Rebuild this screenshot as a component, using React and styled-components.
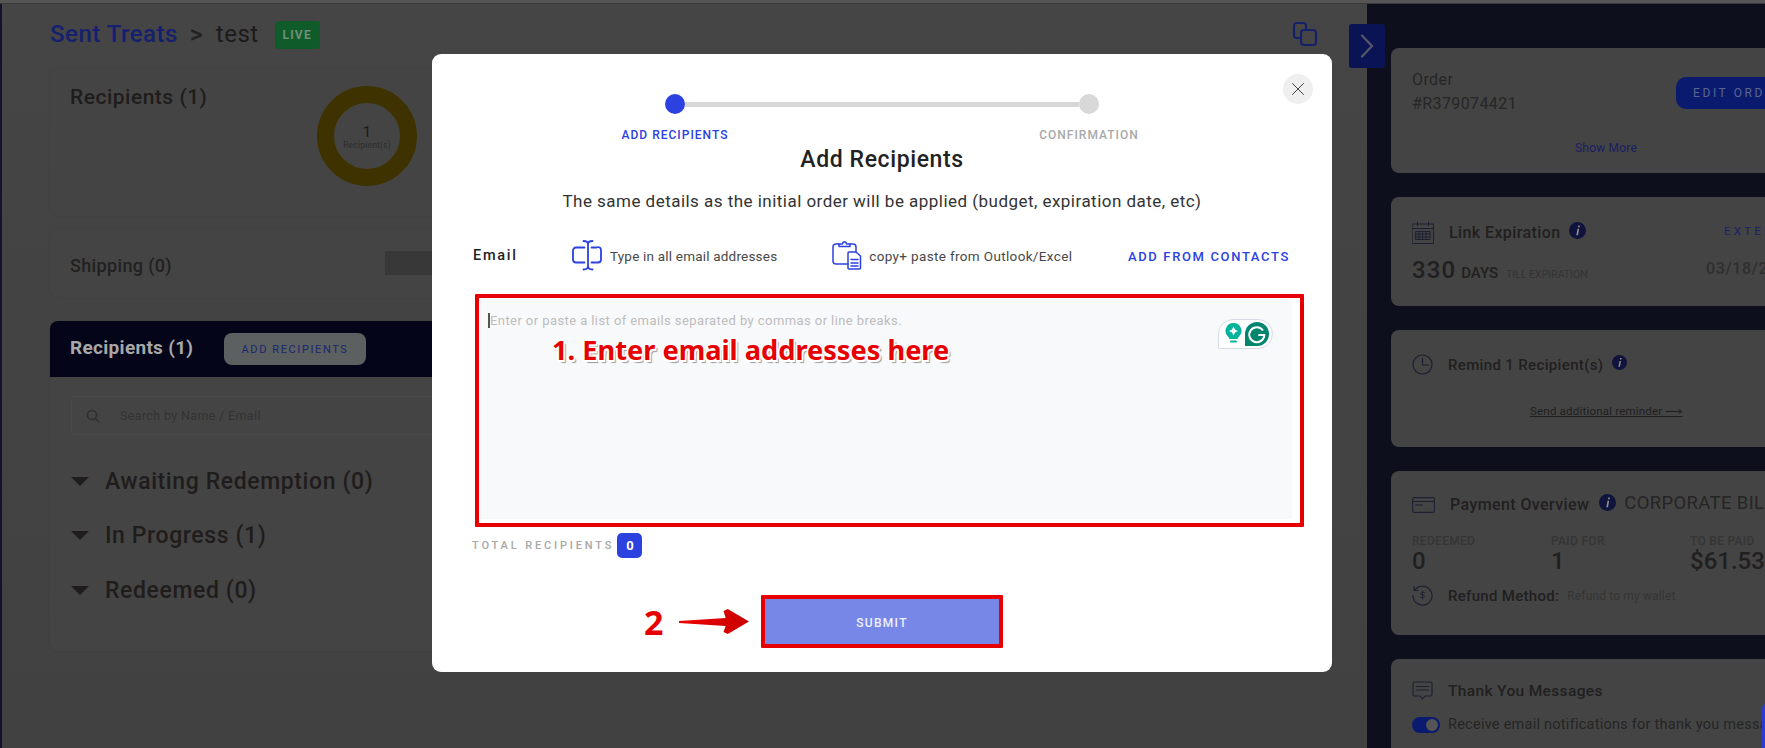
import React from "react";
import styled, { createGlobalStyle } from "styled-components";

const FONT = `"Roboto", "Noto Sans", "Liberation Sans", sans-serif`;
const BLUE = "#2b41e0";
const RED = "#e60000";

const Global = createGlobalStyle`
  html, body { margin: 0; padding: 0; height: 748px; overflow: hidden; background: #434343; }
  body { font-family: ${FONT}; }
  * { box-sizing: border-box; }
`;

const Page = styled.div`display:flex;flex-direction:column;width:1765px;height:748px;overflow:hidden;`;
const TopLine = styled.div`height:4px;background:#555;border-bottom:1px solid #3c3c3c;flex:none;`;
const Stage = styled.div`position:relative;flex:1;display:flex;min-height:0;background:linear-gradient(#454545,#414141);`;
const Rail = styled.div`width:2px;background:#14122e;flex:none;`;
const Main = styled.main`width:1365px;flex:none;padding:16px 0 0 48px;`;

const Crumbs = styled.div`display:flex;align-items:center;height:28px;width:1268px;position:relative;`;
const CrumbLink = styled.span`font-size:24px;font-weight:500;color:#15206e;letter-spacing:.5px;`;
const CrumbSep = styled.span`font-size:25px;font-weight:500;color:#222;margin:0 13px 0 12px;`;
const CrumbName = styled.span`font-size:24px;color:#1c1a1a;letter-spacing:.5px;`;
const LiveBadge = styled.span`margin:2px 0 0 16px;width:45px;height:28px;border-radius:4px;background:#0f5c2a;color:#6f9078;font-size:12px;font-weight:700;letter-spacing:1.2px;display:flex;align-items:center;justify-content:center;`;
const CopyBtn = styled.span`margin-left:auto;display:flex;color:#14206a;`;

const Card = styled.section`width:1240px;background:#444;border-radius:8px;box-shadow:0 0 3px rgba(0,0,0,.05);`;
const SummaryCard = styled(Card)`margin-top:20px;height:148px;padding:18px 20px;display:flex;`;
const SummaryTitle = styled.h2`margin:0;width:247px;font-size:21px;line-height:22px;font-weight:500;color:#1f1c1c;letter-spacing:.5px;`;
const Donut = styled.div`width:100px;height:100px;border-radius:50%;border:17px solid #3e3300;display:flex;flex-direction:column;align-items:center;justify-content:center;color:#1f1c1c;`;
const DonutNum = styled.span`font-size:15px;line-height:15px;margin-top:3px;`;
const DonutLabel = styled.span`font-size:8.5px;line-height:11px;color:#2c2c2c;letter-spacing:.2px;`;
const ShippingCard = styled(Card)`margin-top:13px;height:68px;padding:0 20px;display:flex;align-items:center;`;
const ShippingTitle = styled.h3`margin:4px 0 0;width:315px;font-size:18px;font-weight:500;color:#232020;letter-spacing:.35px;`;
const ShippingBar = styled.div`width:300px;height:24px;background:#383838;`;

const Panel = styled(Card)`margin-top:24px;height:330px;overflow:hidden;`;
const PanelHead = styled.div`height:56px;background:#05051a;padding:0 0 0 20px;display:flex;align-items:center;`;
const PanelTitle = styled.span`width:154px;margin-top:-4px;font-size:19px;font-weight:700;color:#a8a8a8;letter-spacing:.3px;`;
const AddBtn = styled.span`width:142px;height:32px;border-radius:8px;background:#5c6060;color:#1a2670;font-size:11px;letter-spacing:1.6px;display:flex;align-items:center;justify-content:center;`;
const PanelBody = styled.div`padding:19px 21px 0;`;
const Search = styled.div`height:39px;border:1px solid #494949;border-radius:3px;display:flex;align-items:center;padding-left:14px;color:#2e2e2e;`;
const SearchText = styled.span`margin-left:20px;font-size:12.5px;color:#333;letter-spacing:.35px;`;
const Groups = styled.div`margin-top:19px;`;
const Group = styled.div`height:54.5px;display:flex;align-items:center;`;
const Caret = styled.span`width:0;height:0;border-left:9px solid transparent;border-right:9px solid transparent;border-top:9px solid #211c1c;margin-right:16px;`;
const GroupName = styled.span`font-size:23px;font-weight:500;color:#211c1c;letter-spacing:.6px;`;

const SideWrap = styled.div`position:relative;flex:none;width:398px;`;
const Side = styled.aside`height:100%;background:#0e0f1c;padding:44px 0 0 24px;display:flex;flex-direction:column;gap:24px;overflow:hidden;`;
const ToggleTab = styled.span`position:absolute;left:-18px;top:20px;width:36px;height:44px;border-radius:3px;background:#0a1454;color:#55576a;display:flex;align-items:center;justify-content:center;`;
const SideCard = styled.section`flex:none;width:400px;height:${p => p.$h}px;background:#444;border-radius:8px;padding:${p => p.$pt}px 0 0 21px;position:relative;`;
const OrderText = styled.div`font-size:16px;line-height:24px;color:#262626;letter-spacing:.4px;`;
const EditBtn = styled.span`position:absolute;left:285px;top:29px;width:115px;height:32px;border-radius:10px 0 0 10px;background:#0a1a6e;color:#5a6690;font-size:12px;letter-spacing:2.6px;display:flex;align-items:center;padding-left:17px;white-space:nowrap;`;
const ShowMore = styled.div`margin:23px 0 0 163px;font-size:12px;line-height:18px;color:#1b1d66;letter-spacing:.2px;`;
const IconRow = styled.div`display:flex;align-items:center;color:#1f1f1f;`;
const RowIcon = styled.span`display:flex;width:${p => p.$w || 37}px;flex:none;color:#1d2030;`;
const RowTitle = styled.span`font-size:${p => p.$s || 16}px;font-weight:500;color:#211f1f;letter-spacing:${p => p.$ls ?? .4}px;white-space:nowrap;`;
const InfoDot = styled.span`display:flex;margin:-4px 0 0 ${p => p.$ml}px;color:#10143c;`;
const ExtendLink = styled.span`position:absolute;left:333px;top:27px;font-size:11.5px;letter-spacing:3.2px;color:#1a2066;`;
const DaysRow = styled.div`display:flex;align-items:baseline;margin-top:12px;`;
const DaysNum = styled.span`font-size:24px;font-weight:500;color:#211f1f;letter-spacing:1.1px;`;
const DaysUnit = styled.span`margin-left:5px;font-size:15px;font-weight:500;color:#211f1f;`;
const DaysNote = styled.span`margin-left:8px;font-size:10.5px;color:#333;`;
const DateText = styled.span`position:absolute;left:315px;top:62px;font-size:16px;font-weight:500;color:#2f2f2f;letter-spacing:.6px;`;
const ReminderLink = styled.div`margin:29px 0 0 118px;font-size:11.5px;color:#1f1f1f;text-decoration:underline;letter-spacing:.2px;white-space:nowrap;`;
const CorpText = styled.span`margin:-4px 0 0 8px;font-size:18.5px;color:#252525;letter-spacing:.35px;white-space:nowrap;`;
const Stats = styled.div`display:grid;grid-template-columns:139px 139px 139px;margin-top:20px;`;
const StatLabel = styled.div`font-size:12px;line-height:14px;font-weight:500;color:#353535;letter-spacing:.3px;`;
const StatValue = styled.div`font-size:24px;line-height:27px;font-weight:500;color:#211f1f;`;
const RefundRow = styled(IconRow)`margin-top:10px;`;
const RefundNote = styled.span`margin-left:8px;font-size:12px;color:#343434;letter-spacing:.15px;`;
const Switch = styled.span`width:28px;height:16px;border-radius:8px;background:#0a1a6e;padding:2px 2px 2px 14px;display:block;flex:none;`;
const Knob = styled.span`display:block;width:12px;height:12px;border-radius:50%;background:#555;`;
const NotifyRow = styled(IconRow)`margin-top:15px;`;
const NotifyText = styled.span`margin-left:8px;font-size:14.5px;color:#252525;letter-spacing:.25px;white-space:nowrap;`;
const ChatEdge = styled.span`position:absolute;left:395px;top:699px;width:6px;height:45px;border-radius:6px 0 0 0;background:#2b3cd6;`;

const Backdrop = styled.div`position:absolute;inset:0;`;
const Modal = styled.div`position:absolute;left:432px;top:50px;width:900px;height:618px;background:#fff;border-radius:9px;padding-top:40px;display:flex;flex-direction:column;align-items:center;color:#222;`;
const CloseBtn = styled.span`position:absolute;left:851px;top:20px;width:30px;height:30px;border-radius:50%;background:#efefef;color:#444;display:flex;align-items:center;justify-content:center;`;
const Track = styled.div`width:434px;height:20px;display:flex;align-items:center;`;
const StepDot = styled.span`width:20px;height:20px;border-radius:50%;flex:none;background:${p => p.$on ? BLUE : "#d8d8d8"};`;
const StepLine = styled.span`flex:1;height:5px;background:#d8d8d8;`;
const StepLabels = styled.div`width:534px;display:flex;justify-content:space-between;margin-top:13px;`;
const StepLabel = styled.span`width:120px;text-align:center;font-size:12px;line-height:16px;font-weight:500;letter-spacing:1px;white-space:nowrap;color:${p => p.$on ? BLUE : "#a9a9a9"};`;
const ModalTitle = styled.h2`margin:3px 0 0;font-size:23px;line-height:28px;font-weight:500;color:#222;letter-spacing:.6px;`;
const ModalSub = styled.p`margin:17px 0 0;font-size:17px;line-height:20px;color:#333;letter-spacing:.47px;white-space:nowrap;`;
const HintRow = styled.div`align-self:flex-start;margin:28px 0 0 41px;width:817px;height:32px;display:flex;align-items:center;`;
const EmailLabel = styled.span`width:99px;margin-top:1px;font-size:14.5px;font-weight:500;letter-spacing:1.7px;color:#222;`;
const HintIcon = styled.span`display:flex;color:${BLUE};margin-left:${p => p.$ml || 0}px;`;
const HintText = styled.span`margin-top:2px;font-size:13.5px;color:#484848;letter-spacing:${p => p.$ls}px;margin-left:${p => p.$ml}px;white-space:nowrap;`;
const ContactsLink = styled.span`margin:2px 0 0 auto;font-size:13px;font-weight:500;color:${BLUE};letter-spacing:1.65px;white-space:nowrap;`;

const RedFrame = styled.div`align-self:flex-start;margin:23px 0 0 43px;width:829px;height:233px;border:4px solid ${RED};border-radius:1px;padding:1px 8px 4px 0;position:relative;`;
const AreaBox = styled.div`height:100%;background:#f8f9fb;padding:14px 0 0 9px;display:flex;align-items:flex-start;position:relative;`;
const CaretBar = styled.span`width:2px;height:15px;background:#555;flex:none;`;
const Placeholder = styled.span`font-size:13px;line-height:15px;color:#bdbdbd;letter-spacing:.42px;`;
const Annotation = styled.span`position:absolute;left:73px;top:34px;font-family:"Noto Sans","Open Sans",sans-serif;font-size:27.2px;line-height:36px;font-weight:700;color:${RED};white-space:nowrap;text-shadow:1.5px 1.5px 0 #fff,-1.5px -1.5px 0 #fff,1.5px -1.5px 0 #fff,-1.5px 1.5px 0 #fff,2.5px 3px 1px #999;`;
const GrammarlyPill = styled.span`position:absolute;left:739px;top:20px;width:55px;height:30px;background:#fff;border:1px solid #d6dbe6;border-radius:15px 15px 15px 0;display:flex;align-items:center;gap:3px;padding-left:6px;`;

const TotalRow = styled.div`align-self:flex-start;margin:6px 0 0 40px;display:flex;align-items:center;height:25px;`;
const TotalLabel = styled.span`font-size:11px;font-weight:500;letter-spacing:2.85px;color:#a8a8a8;`;
const TotalBadge = styled.span`margin-left:3px;width:25px;height:25px;border-radius:5px;background:${BLUE};color:#fff;font-size:13px;font-weight:700;display:flex;align-items:center;justify-content:center;`;

const SubmitRow = styled.div`align-self:flex-start;margin:37px 0 0 212px;display:flex;align-items:center;position:relative;`;
const StepTwo = styled.span`width:35px;font-family:"Noto Sans",sans-serif;font-size:34px;line-height:44px;font-weight:700;color:${RED};text-shadow:1.5px 1.5px 0 #fff,-1.5px -1.5px 0 #fff,1.5px -1.5px 0 #fff,-1.5px 1.5px 0 #fff,1px 2px 1px #ccc;`;
const ArrowWrap = styled.span`display:flex;width:82px;`;
const SubmitBtn = styled.span`width:242px;height:53px;border:4px solid ${RED};border-radius:1px;background:#7787e8;color:#eef0ff;font-size:12px;font-weight:500;letter-spacing:1.3px;padding-top:2px;display:flex;align-items:center;justify-content:center;`;

const Ico = ({ w = 20, h = 20, sw = 1.4, children }) => (
  <svg width={w} height={h} viewBox={`0 0 ${w} ${h}`} fill="none" stroke="currentColor" strokeWidth={sw} strokeLinecap="round" strokeLinejoin="round">{children}</svg>
);

const Info = ({ s = 17 }) => (
  <svg width={s} height={s} viewBox="0 0 17 17">
    <circle cx="8.5" cy="8.5" r="8.5" fill="currentColor" />
    <path d="M9.3 3.4h1.7l-.4 1.8H8.9zM8.5 6.7h1.7L9 13.2H7.3z" fill="#8e8e8e" />
  </svg>
);

export default function App() {
  return (
    <Page>
      <Global />
      <TopLine />
      <Stage>
        <Rail />
        <Main>
          <Crumbs>
            <CrumbLink>Sent Treats</CrumbLink>
            <CrumbSep>&gt;</CrumbSep>
            <CrumbName>test</CrumbName>
            <LiveBadge>LIVE</LiveBadge>
            <CopyBtn>
              <Ico w={26} h={26} sw={2.2}>
                <path d="M7 17H4.5A2.5 2.5 0 0 1 2 14.5V4.5A2.5 2.5 0 0 1 4.5 2h7A2.5 2.5 0 0 1 14 4.5V8" />
                <rect x="9" y="9" width="15" height="15" rx="3" />
              </Ico>
            </CopyBtn>
          </Crumbs>
          <SummaryCard>
            <SummaryTitle>Recipients (1)</SummaryTitle>
            <Donut>
              <DonutNum>1</DonutNum>
              <DonutLabel>Recipient(s)</DonutLabel>
            </Donut>
          </SummaryCard>
          <ShippingCard>
            <ShippingTitle>Shipping (0)</ShippingTitle>
            <ShippingBar />
          </ShippingCard>
          <Panel>
            <PanelHead>
              <PanelTitle>Recipients (1)</PanelTitle>
              <AddBtn>ADD RECIPIENTS</AddBtn>
            </PanelHead>
            <PanelBody>
              <Search>
                <Ico w={14} h={14} sw={1.5}>
                  <circle cx="6" cy="6" r="4.5" />
                  <path d="M9.5 9.5 13 13" />
                </Ico>
                <SearchText>Search by Name / Email</SearchText>
              </Search>
              <Groups>
                {["Awaiting Redemption (0)", "In Progress (1)", "Redeemed (0)"].map(t => (
                  <Group key={t}><Caret /><GroupName>{t}</GroupName></Group>
                ))}
              </Groups>
            </PanelBody>
          </Panel>
        </Main>
        <SideWrap>
          <Side>
            <SideCard $h={125} $pt={20}>
              <OrderText>Order</OrderText>
              <OrderText>#R379074421</OrderText>
              <EditBtn>EDIT ORDER</EditBtn>
              <ShowMore>Show More</ShowMore>
            </SideCard>
            <SideCard $h={109} $pt={24}>
              <IconRow>
                <RowIcon>
                  <Ico w={22} h={23} sw={1}>
                    <rect x=".5" y="3" width="21" height="19.5" />
                    <path d="M.5 7.5h21M5.5 1v3.5M16.5 1v3.5M4 10.5h14v8H4zM4 13h14M4 16h14M7 10.5v8M10.5 10.5v8M14 10.5v8" />
                  </Ico>
                </RowIcon>
                <RowTitle>Link Expiration</RowTitle>
                <InfoDot $ml={8}><Info /></InfoDot>
              </IconRow>
              <ExtendLink>EXTEND</ExtendLink>
              <DaysRow>
                <DaysNum>330</DaysNum>
                <DaysUnit>DAYS</DaysUnit>
                <DaysNote>TILL EXPIRATION</DaysNote>
              </DaysRow>
              <DateText>03/18/2024</DateText>
            </SideCard>
            <SideCard $h={117} $pt={24}>
              <IconRow>
                <RowIcon $w={36}>
                  <Ico w={21} h={21} sw={1.2}>
                    <circle cx="10.5" cy="10.5" r="9.5" />
                    <path d="M10.5 4.5v6.5h6" />
                  </Ico>
                </RowIcon>
                <RowTitle $s={15} $ls={.35}>Remind 1 Recipient(s)</RowTitle>
                <InfoDot $ml={9}><Info s={15} /></InfoDot>
              </IconRow>
              <ReminderLink>Send additional reminder ⟶</ReminderLink>
            </SideCard>
            <SideCard $h={164} $pt={24}>
              <IconRow>
                <RowIcon $w={38}>
                  <Ico w={23} h={16} sw={1.1}>
                    <rect x=".6" y=".6" width="21.8" height="14.8" rx="1.5" />
                    <path d="M.6 4.5h21.8M3.5 8h7" />
                  </Ico>
                </RowIcon>
                <RowTitle>Payment Overview</RowTitle>
                <InfoDot $ml={10}><Info /></InfoDot>
                <CorpText>CORPORATE BILLING</CorpText>
              </IconRow>
              <Stats>
                <div><StatLabel>REDEEMED</StatLabel><StatValue>0</StatValue></div>
                <div><StatLabel>PAID FOR</StatLabel><StatValue>1</StatValue></div>
                <div><StatLabel>TO BE PAID</StatLabel><StatValue>$61.53</StatValue></div>
              </Stats>
              <RefundRow>
                <RowIcon $w={36}>
                  <Ico w={21} h={21} sw={1.2}>
                    <path d="M2.5 5.5A9.5 9.5 0 1 1 1 10.5M2.2 1.5v4h4" />
                    <path d="M13 8c-.5-1-3.5-1.3-4.2.2-.7 1.8 4.2 1.5 3.8 3.5-.4 1.5-3.5 1.3-4.3.2M10.500 6v8" strokeWidth=".9" />
                  </Ico>
                </RowIcon>
                <RowTitle $s={15} $ls={.3}>Refund Method:</RowTitle>
                <RefundNote>Refund to my wallet</RefundNote>
              </RefundRow>
            </SideCard>
            <SideCard $h={120} $pt={22}>
              <IconRow>
                <RowIcon $w={36}>
                  <Ico w={21} h={20} sw={1.1}>
                    <path d="M2.5 1h16A1.5 1.5 0 0 1 20 2.5v11a1.5 1.5 0 0 1-1.5 1.5H13l-2.500 3L8 15H2.5A1.5 1.5 0 0 1 1 13.500v-11A1.5 1.5 0 0 1 2.5 1zM4.500 5.500h12M4.500 9h12" />
                  </Ico>
                </RowIcon>
                <RowTitle $s={15.5} $ls={.35}>Thank You Messages</RowTitle>
              </IconRow>
              <NotifyRow>
                <Switch><Knob /></Switch>
                <NotifyText>Receive email notifications for thank you messages</NotifyText>
              </NotifyRow>
            </SideCard>
          </Side>
          <ToggleTab>
            <Ico w={14} h={24} sw={2.2}><path d="M2 1.5 12 12 2 22.5" /></Ico>
          </ToggleTab>
          <ChatEdge />
        </SideWrap>

        <Backdrop>
          <Modal>
            <CloseBtn>
              <Ico w={14} h={14} sw={1}><path d="M1.5 1.5l11 11M12.5 1.5l-11 11" /></Ico>
            </CloseBtn>
            <Track>
              <StepDot $on />
              <StepLine />
              <StepDot />
            </Track>
            <StepLabels>
              <StepLabel $on>ADD RECIPIENTS</StepLabel>
              <StepLabel>CONFIRMATION</StepLabel>
            </StepLabels>
            <ModalTitle>Add Recipients</ModalTitle>
            <ModalSub>The same details as the initial order will be applied (budget, expiration date, etc)</ModalSub>
            <HintRow>
              <EmailLabel>Email</EmailLabel>
              <HintIcon>
                <Ico w={31} h={31} sw={1.8}>
                  <path d="M12.5 7.5H4A3 3 0 0 0 1 10.5v9A3 3 0 0 0 4 22.5h8.5M19.5 7.5h5A3 3 0 0 1 29 10.5v9a3 3 0 0 1-3 3h-6.5" />
                  <path d="M11.5 1c3 0 4.5 1 4.5 3v22c0 2-1.5 3.5-4.5 3.5M20.5 1c-3 0-4.5 1-4.5 3M20.5 29.5c-3 0-4.5-1.500-4.500-3.500" />
                </Ico>
              </HintIcon>
              <HintText $ml={7} $ls={.2}>Type in all email addresses</HintText>
              <HintIcon $ml={55}>
                <Ico w={30} h={30} sw={1.5}>
                  <path d="M16 24H4a3 3 0 0 1-3-3V7a3 3 0 0 1 3-3h3M18 4h3a3 3 0 0 1 3 3v5" />
                  <path d="M7 6.500V4h3.500c.5-3 3.500-3 4 0H18v2.500z" />
                  <path d="M17 12h7l4.500 4v12a1 1 0 0 1-1 1H17a1 1 0 0 1-1-1V13a1 1 0 0 1 1-1zM19 19.500h7M19 23h7M19 26h7" />
                </Ico>
              </HintIcon>
              <HintText $ml={7} $ls={.35}>copy+ paste from Outlook/Excel</HintText>
              <ContactsLink>ADD FROM CONTACTS</ContactsLink>
            </HintRow>
            <RedFrame>
              <AreaBox>
                <CaretBar />
                <Placeholder>Enter or paste a list of emails separated by commas or line breaks.</Placeholder>
                <GrammarlyPill>
                  <svg width="17" height="24" viewBox="0 0 17 24">
                    <path d="M8.5 1a8 8 0 0 1 5 14.2c-.7.6-1 1.3-1 1.8h-8c0-.5-.3-1.2-1-1.800A8 8 0 0 1 8.5 1z" fill="#00b39b" />
                    <path d="M8.5 4.5 10 7.5l3 1.5-3 1.5-1.5 3-1.5-3-3-1.5 3-1.5z" fill="#fff" />
                    <rect x="5" y="18.5" width="7" height="2" rx="1" fill="#00b39b" />
                  </svg>
                  <svg width="24" height="24" viewBox="0 0 24 24">
                    <path d="M12 0a12 12 0 0 1 0 24H0V12A12 12 0 0 1 12 0z" fill="#00856f" />
                    <path d="M18 8.5A7.5 7.5 0 1 0 19.3 13h-6" fill="none" stroke="#fff" strokeWidth="2" />
                  </svg>
                </GrammarlyPill>
              </AreaBox>
              <Annotation>1. Enter email addresses here</Annotation>
            </RedFrame>
            <TotalRow>
              <TotalLabel>TOTAL RECIPIENTS</TotalLabel>
              <TotalBadge>0</TotalBadge>
            </TotalRow>
            <SubmitRow>
              <StepTwo>2</StepTwo>
              <ArrowWrap>
                <svg width="70" height="26" viewBox="0 0 66 26" preserveAspectRatio="none">
                  <defs>
                    <linearGradient id="arrowFill" x1="0" x2="1" y1="0" y2="0">
                      <stop offset="0" stopColor="#f00000" />
                      <stop offset="1" stopColor="#c80000" />
                    </linearGradient>
                  </defs>
                  <path d="M0 12 44 9 42 2 46 0 66 12.5 46 25 42 23 44 17 0 14z" fill="url(#arrowFill)" />
                </svg>
              </ArrowWrap>
              <SubmitBtn>SUBMIT</SubmitBtn>
            </SubmitRow>
          </Modal>
        </Backdrop>
      </Stage>
    </Page>
  );
}
